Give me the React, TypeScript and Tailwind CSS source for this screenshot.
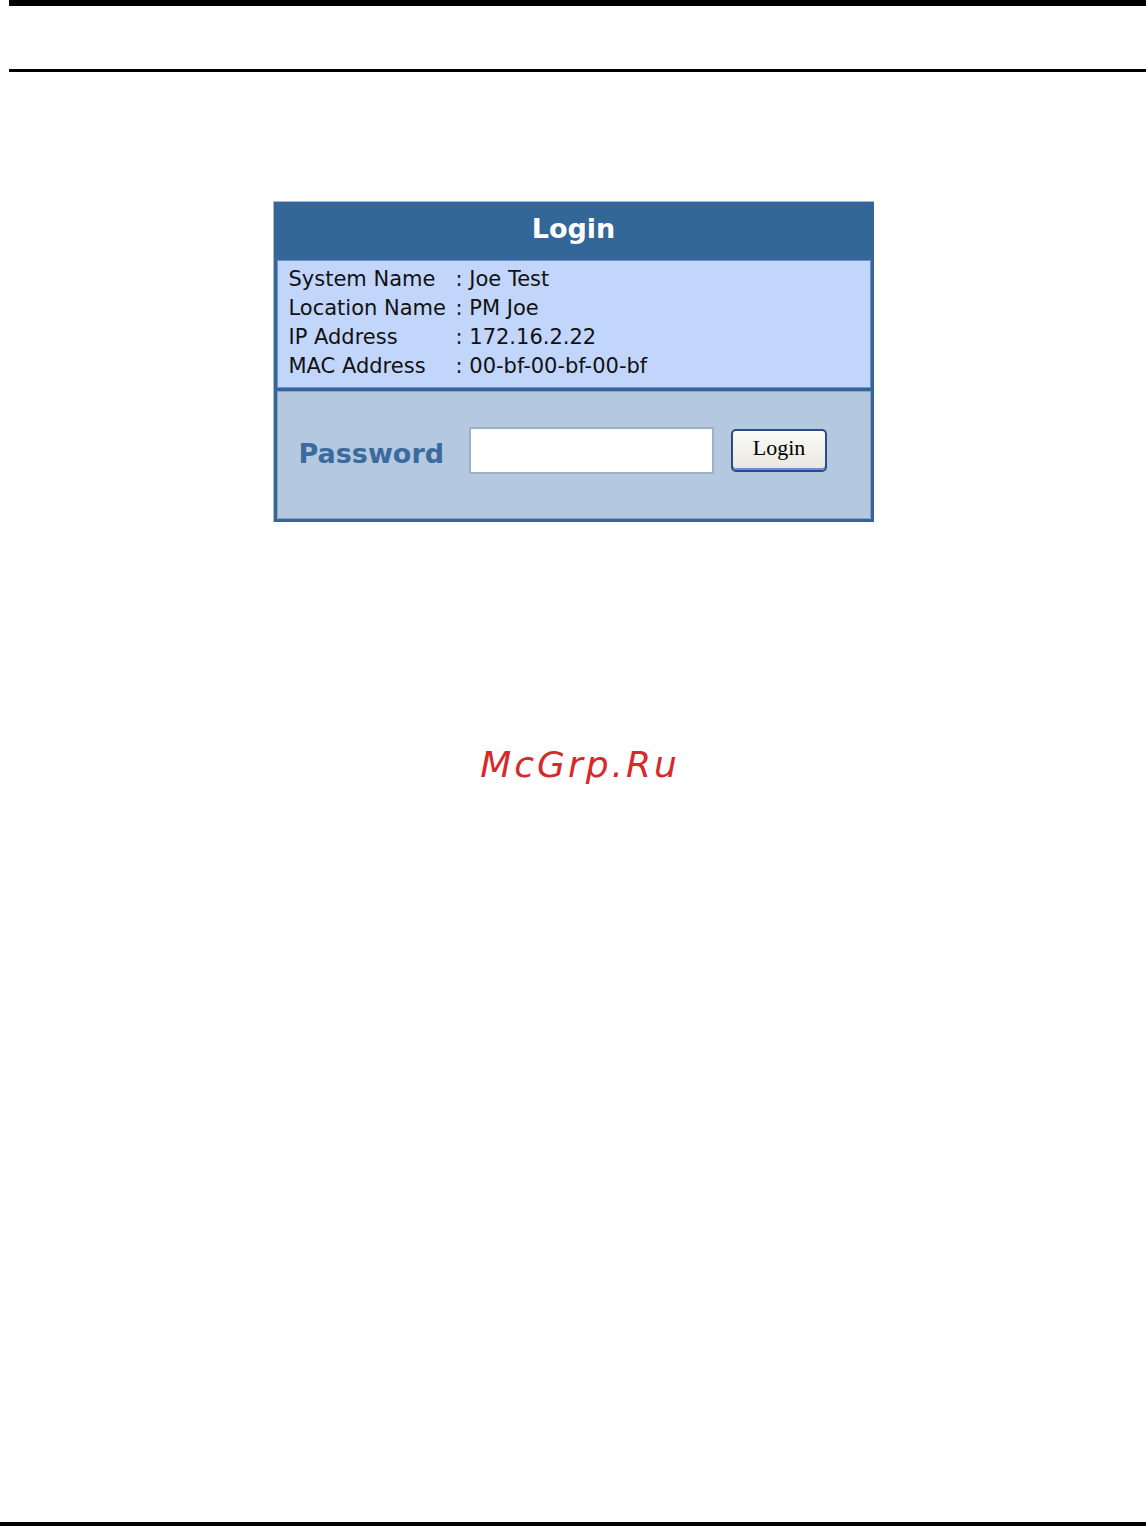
export default function App() {
  const rows: [string, string][] = [
    ["System Name", "Joe Test"],
    ["Location Name", "PM Joe"],
    ["IP Address", "172.16.2.22"],
    ["MAC Address", "00-bf-00-bf-00-bf"],
  ];

  return (
    <div className="flex h-[1526px] flex-col bg-white font-['DejaVu_Sans',sans-serif]">
      <div className="ml-[9px] h-[6px] bg-black" />
      <div className="ml-[9px] mt-[63px] h-[3px] bg-black" />

      <div className="mx-auto mt-[129px] flex w-[601px] flex-col gap-[3px] border-l border-t border-[#b4b8c0] bg-[#336699] px-[3px] pb-[3px]">
        <div className="flex h-[55px] items-center justify-center text-[27px] font-bold text-white">
          Login
        </div>
        <div className="h-[128px] border border-[#6f93c6] bg-[#c2d6fc] px-[11px] pt-[4px] text-[21px] leading-[29px] text-[#111]">
          {rows.map(([label, value]) => (
            <div key={label} className="flex">
              <span className="w-[167px] shrink-0">{label}</span>
              <span>: {value}</span>
            </div>
          ))}
        </div>
        <div className="h-[128px] border border-[#86a3c8] bg-[#b4c8e0] pl-[21px] pt-[34px]">
          <div className="flex items-center">
            <span className="mt-[8px] text-[27px] font-bold text-[#3b6b9e]">Password</span>
            <input
              type="password"
              className="ml-[25px] h-[47px] w-[245px] border-2 border-[#9cb0c8] bg-white outline-none"
            />
            <button
              type="button"
              className="ml-[17px] h-[43px] w-[96px] rounded-[5px] border-2 border-[#2b4a86] bg-gradient-to-b from-[#fbfbf8] to-[#e9e7df] pb-[9px] font-['Liberation_Serif',serif] text-[22px] text-black shadow-[inset_0_-2px_0_#6a8fd8,inset_0_1px_0_#ffffff]"
            >
              Login
            </button>
          </div>
        </div>
      </div>

      <div className="mt-[225px] pl-[14px] text-center text-[36px] italic leading-none tracking-[3px] text-[#d62a2a]">
        McGrp.Ru
      </div>

      <div className="mt-auto h-[4px] bg-black" />
    </div>
  );
}
